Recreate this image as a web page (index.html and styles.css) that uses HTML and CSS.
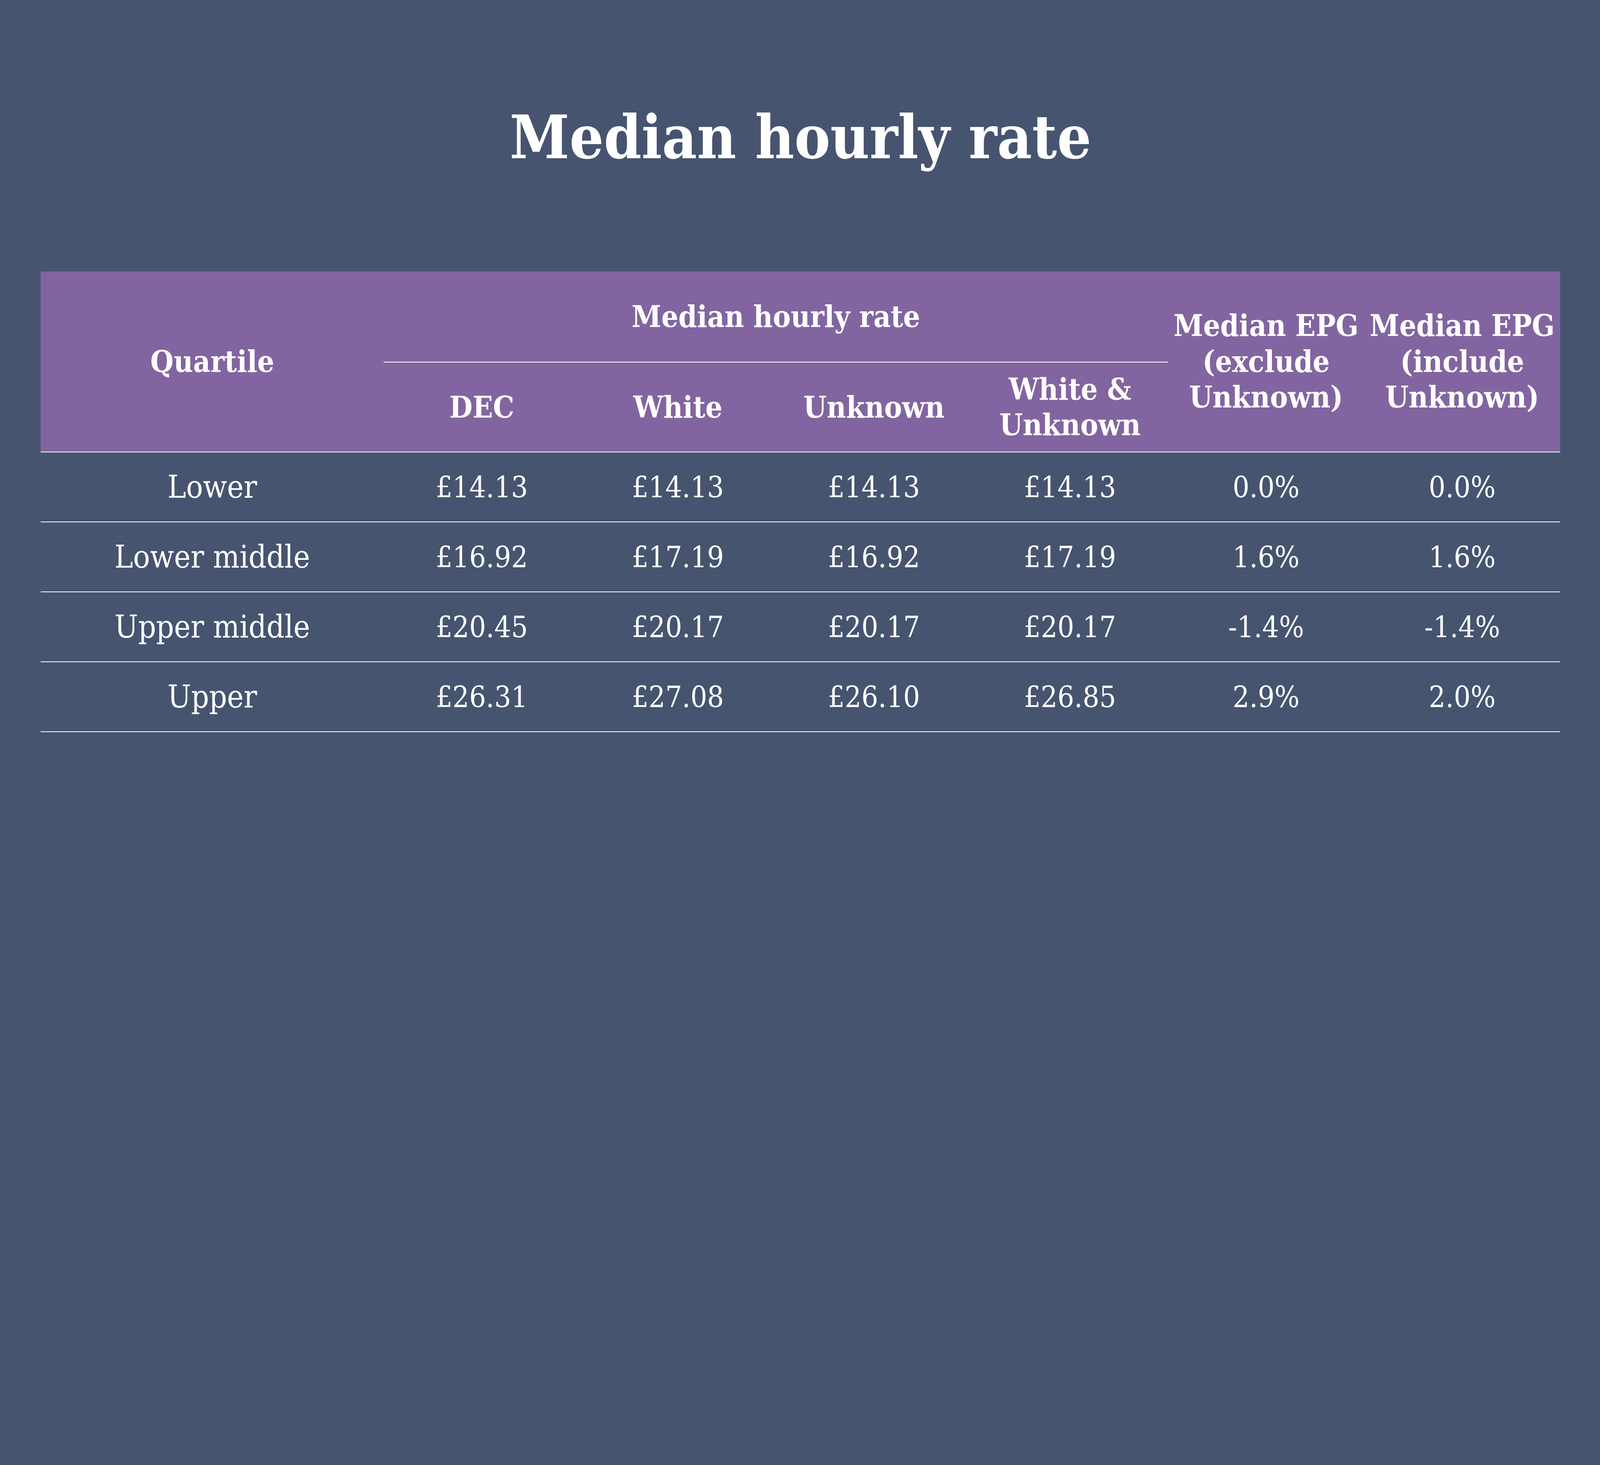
FILE: index.html
```html
<!DOCTYPE html>
<html lang="en">
<head>
<meta charset="utf-8">
<title>Median hourly rate</title>
<link rel="stylesheet" href="styles.css">
</head>
<body>
<main class="slide">
  <h1 class="title">Median hourly rate</h1>
  <table class="rates">
    <colgroup>
      <col class="col-quartile">
      <col class="col-data"><col class="col-data"><col class="col-data">
      <col class="col-data"><col class="col-data"><col class="col-data">
    </colgroup>
    <thead>
      <tr class="head-top">
        <th rowspan="2">Quartile</th>
        <th colspan="4" class="group">Median hourly rate</th>
        <th rowspan="2">Median EPG<br>(exclude<br>Unknown)</th>
        <th rowspan="2">Median EPG<br>(include<br>Unknown)</th>
      </tr>
      <tr class="head-sub">
        <th>DEC</th>
        <th>White</th>
        <th>Unknown</th>
        <th>White &amp;<br>Unknown</th>
      </tr>
    </thead>
    <tbody>
      <tr><td class="label">Lower</td><td>£14.13</td><td>£14.13</td><td>£14.13</td><td>£14.13</td><td>0.0%</td><td>0.0%</td></tr>
      <tr><td class="label">Lower middle</td><td>£16.92</td><td>£17.19</td><td>£16.92</td><td>£17.19</td><td>1.6%</td><td>1.6%</td></tr>
      <tr><td class="label">Upper middle</td><td>£20.45</td><td>£20.17</td><td>£20.17</td><td>£20.17</td><td>-1.4%</td><td>-1.4%</td></tr>
      <tr><td class="label">Upper</td><td>£26.31</td><td>£27.08</td><td>£26.10</td><td>£26.85</td><td>2.9%</td><td>2.0%</td></tr>
    </tbody>
  </table>
</main>
</body>
</html>
```
FILE: styles.css
```css
html {
  font-size: 1.5vw;
  margin: 0;
  padding: 0;
  background: #47546f;
}

body {
  margin: 0;
  padding: 0;
  background: #47546f;
}

.slide {
  width: 66.67rem;
  height: 37.5rem;
  box-sizing: border-box;
  padding: 4.47rem 1.66rem 0 1.7rem;
  overflow: hidden;
  background: #47546f;
  color: #ffffff;
  font-family: "DejaVu Serif Condensed", "DejaVu Serif", serif;
}

.title {
  margin: 0 0 4.34rem 0;
  font-size: 2.5rem;
  line-height: 2.5rem;
  font-weight: bold;
  text-align: center;
  color: #ffffff;
}

.rates {
  width: 63.31rem;
  border-collapse: collapse;
  table-layout: fixed;
}

.col-quartile { width: 14.29rem; }
.col-data { width: 8.17rem; }

.rates thead {
  background: #8265a0;
}

.rates th {
  font-size: 1.24rem;
  line-height: 1.49rem;
  font-weight: bold;
  text-align: center;
  vertical-align: middle;
  padding: 0;
  white-space: nowrap;
}

.head-top { height: 3.78rem; }
.head-sub { height: 3.75rem; }

.rates th.group {
  border-bottom: 0.036rem solid #ffffff;
}

.rates td {
  height: 2.88rem;
  padding: 0;
  font-family: "DejaVu Serif Condensed", "DejaVu Serif", serif;
  font-size: 1.22rem;
  font-weight: normal;
  text-align: center;
  vertical-align: middle;
  border-bottom: 0.036rem solid #ffffff;
  white-space: nowrap;
}

.rates td.label {
  font-size: 1.3rem;
}

.rates tbody tr:first-child td {
  border-top: 0.036rem solid #ffffff;
}
```
